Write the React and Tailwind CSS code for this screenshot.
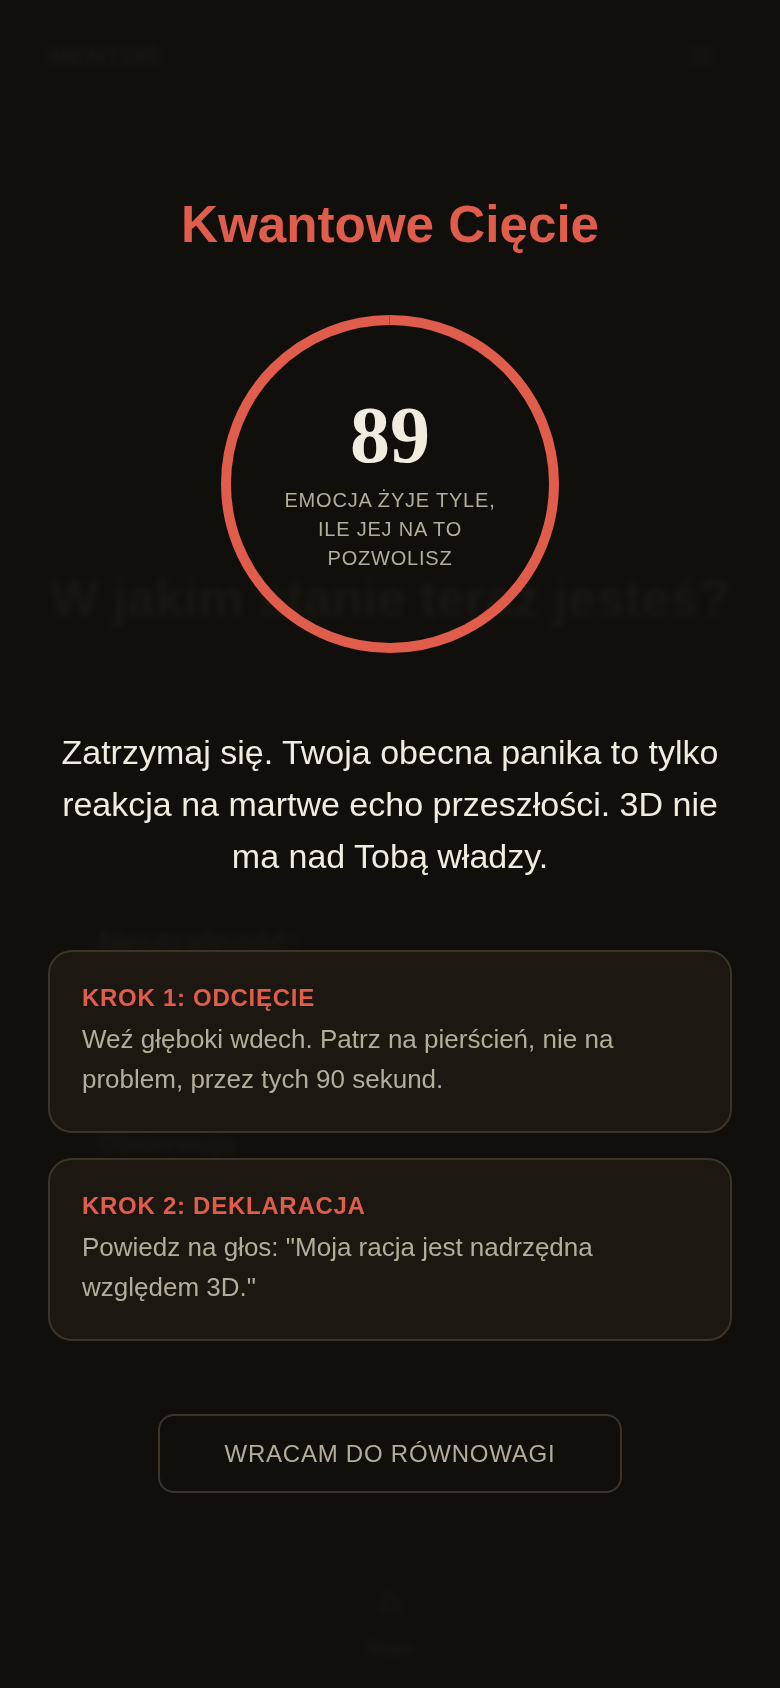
import { Sun, Triangle } from 'lucide-react';

const sans = 'font-["Liberation_Sans",Arial,sans-serif]';

const kroki = [
  { tytul: 'KROK 1: ODCIĘCIE', tekst: 'Weź głęboki wdech. Patrz na pierścień, nie na problem, przez tych 90 sekund.' },
  { tytul: 'KROK 2: DEKLARACJA', tekst: 'Powiedz na głos: "Moja racja jest nadrzędna względem 3D."' },
];

function Strona() {
  return (
    <div className="flex flex-col h-[1688px] text-[#f0e8d8]">
      <header className="flex items-center justify-between pl-[49px] pr-[64px] pt-[41px]">
        <span className="text-[25.6px] font-bold leading-[30px]">MENTOR</span>
        <Sun size={28} strokeWidth={2.5} />
      </header>
      <h1 className="mt-[500px] text-center text-[51.2px] font-bold leading-[56px]">W jakim stanie teraz jesteś?</h1>
      <div className="pl-[98px] mt-[296px] text-[33px] font-bold leading-[40px]">Neutralność:</div>
      <div className="pl-[98px] mt-[165px] text-[27px] font-bold leading-[32px]">Obserwuję</div>
      <nav className="mt-auto mb-[30px] flex flex-col items-center gap-[24px]">
        <Triangle size={24} strokeWidth={3} />
        <span className="text-[18px] font-bold leading-[20px]">Mapa</span>
      </nav>
    </div>
  );
}

export default function App() {
  return (
    <div className={`relative h-[1688px] w-[780px] overflow-hidden bg-[#120f0b] ${sans}`}>
      <Strona />
      <div className="absolute inset-0 flex flex-col items-center bg-[#120f0b]/[0.97] backdrop-blur-[3px] px-[48px] pt-[195px]">
        <h2 className="text-[51.2px] font-bold leading-[60px] text-[#e05c4b]">Kwantowe Cięcie</h2>
        <div className="relative mt-[60px] flex h-[338px] w-[338px] flex-col items-center pt-[80px]">
          <svg className="absolute inset-0 -rotate-90" viewBox="0 0 338 338" fill="none">
            <circle cx="169" cy="169" r="164" stroke="#e05c4b" strokeWidth="10" strokeDasharray="1029.8 0.6" />
          </svg>
          <span className='font-["Liberation_Serif",serif] text-[80px] font-bold leading-[80px] text-[#f0ecdf]'>89</span>
          <p className="mt-[11px] w-[230px] text-center text-[20px] leading-[29px] tracking-[0.8px] text-[#b3ad9b]">
            EMOCJA ŻYJE TYLE, ILE JEJ NA TO POZWOLISZ
          </p>
        </div>
        <p className="mt-[73px] text-center text-[34px] leading-[52px] text-[#f0ecdf]">
          Zatrzymaj się. Twoja obecna panika to tylko reakcja na martwe echo przeszłości. 3D nie ma nad Tobą władzy.
        </p>
        <div className="mt-[68px] flex w-full flex-col gap-[25px]">
          {kroki.map((k) => (
            <div key={k.tytul} className="rounded-[24px] border-2 border-[#3c3429] bg-[#1c1811] px-[32px] pt-[30px] pb-[32px]">
              <h3 className="mb-[5px] text-[24px] font-bold leading-[32px] tracking-[0.72px] text-[#e05c4b]">{k.tytul}</h3>
              <p className="text-[26px] leading-[40px] text-[#b3ad9b]">{k.tekst}</p>
            </div>
          ))}
        </div>
        <button className="mt-[73px] h-[79px] w-[464px] rounded-[16px] border-2 border-[#3c3429] text-[24px] tracking-[0.76px] text-[#b3ad9b]">
          WRACAM DO RÓWNOWAGI
        </button>
      </div>
    </div>
  );
}
